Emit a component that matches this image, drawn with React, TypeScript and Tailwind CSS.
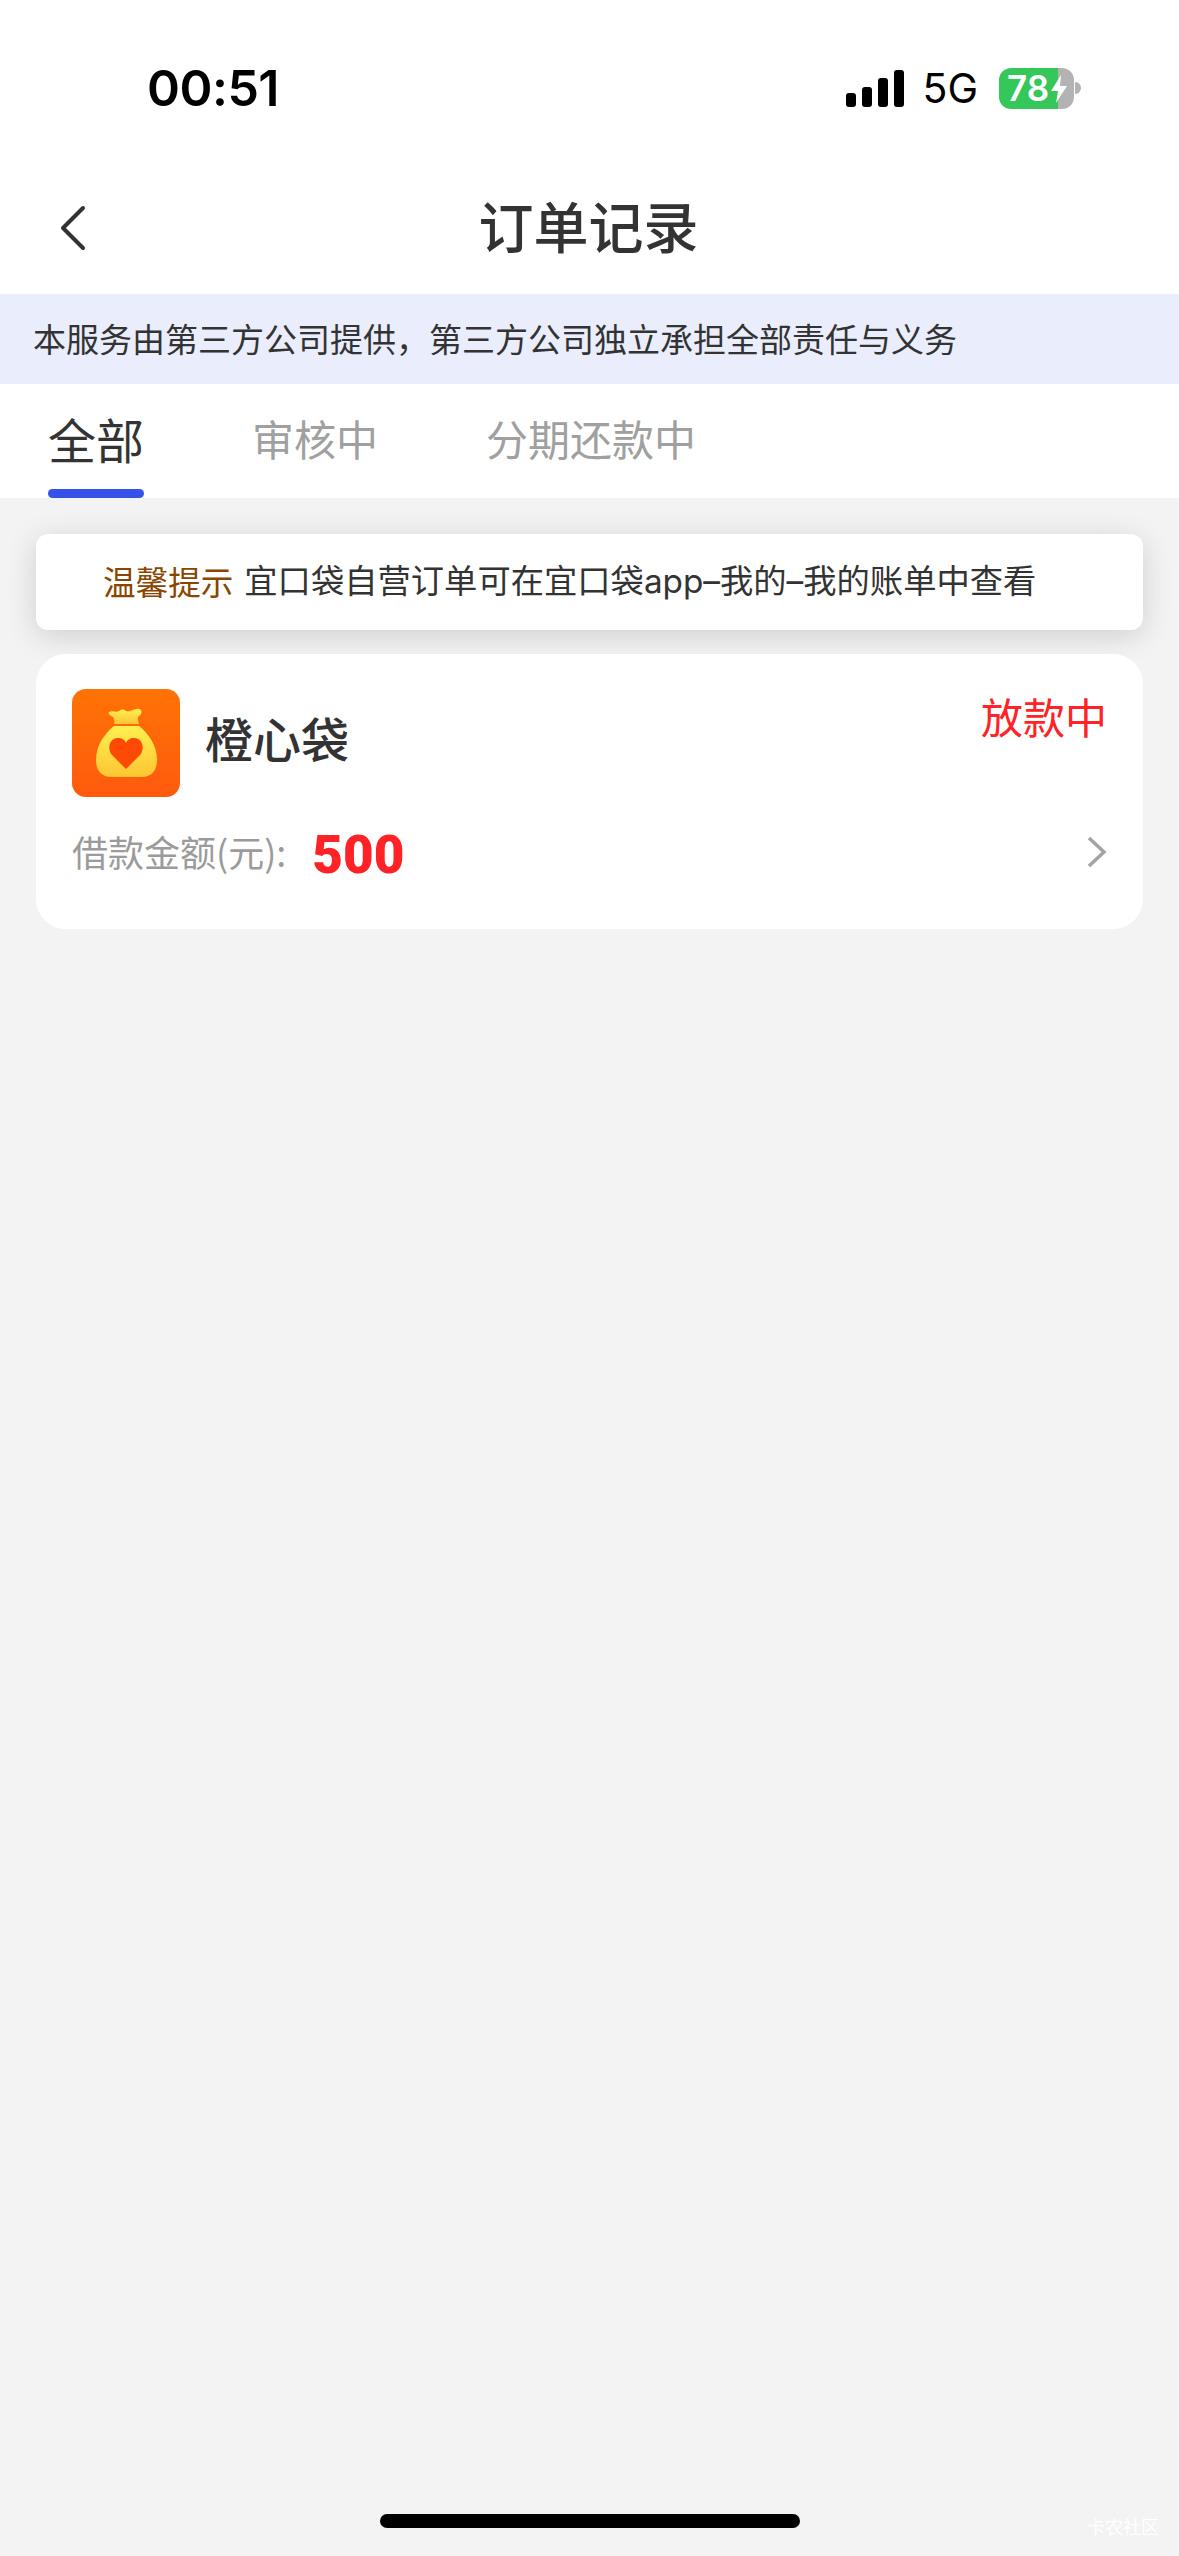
const cjk = "font-['Noto_Sans_CJK_SC','Inter',sans-serif]"

function StatusBar() {
  return (
    <div className="h-[165px] flex items-start justify-between pl-[147px] pr-[98px] pt-[57px]">
      <span className="font-['Inter',sans-serif] text-[50px] leading-[62px] font-semibold text-black tracking-[-0.5px]">00:51</span>
      <div className="flex items-center mt-[9px]">
        <div className="flex items-end gap-[6px] h-[37px]">
          <div className="w-[10px] h-[14px] rounded-[3px] bg-black" />
          <div className="w-[10px] h-[20px] rounded-[3px] bg-black" />
          <div className="w-[10px] h-[29px] rounded-[3px] bg-black" />
          <div className="w-[10px] h-[37px] rounded-[3px] bg-black" />
        </div>
        <span className="ml-[18px] font-['Inter',sans-serif] text-[41px] leading-[44px] text-black">5G</span>
        <div className="relative ml-[21px] flex items-center">
          <div className="relative flex w-[75px] h-[41px] rounded-[12px] overflow-hidden">
            <div className="w-[59px] bg-[#35c759]" />
            <div className="flex-1 bg-[#b3b3b3]" />
            <span className="absolute left-[8px] top-0 font-['Inter',sans-serif] text-[35px] leading-[41px] font-semibold text-white">78</span>
            <svg className="absolute left-[51px] top-[7px]" width="18" height="28" viewBox="0 0 18 28">
              <path d="M11 0 L1 16 H8 L6 28 L17 11 H10 Z" fill="#fff" />
            </svg>
          </div>
          <div className="ml-[1px] w-[6px] h-[12px] rounded-r-full bg-[#b3b3b3]" />
        </div>
      </div>
    </div>
  )
}

function NavBar() {
  return (
    <div className="relative h-[129px] flex items-center justify-center pb-[12px]">
      <svg className="absolute left-[58px] top-[40px]" width="30" height="46" viewBox="0 0 30 46" fill="none">
        <path d="M25 3 L5 23 L25 43" stroke="#333" strokeWidth="4" strokeLinecap="round" strokeLinejoin="round" />
      </svg>
      <h1 className="text-[55px] leading-[72px] font-medium text-[#333] -ml-[2px]">订单记录</h1>
    </div>
  )
}

function Tabs() {
  return (
    <div className="relative h-[114px] bg-white flex items-start pl-[48px] pt-[22px]">
      <span className="text-[48px] leading-[64px] text-[#333]">全部</span>
      <span className="ml-[108px] text-[42px] leading-[64px] text-[#a0a0a0]">审核中</span>
      <span className="ml-[108px] text-[42px] leading-[64px] text-[#a0a0a0]">分期还款中</span>
      <div className="absolute left-[48px] bottom-0 w-[96px] h-[9px] rounded-full bg-[#3652e8]" />
    </div>
  )
}

function BagLogo() {
  return (
    <svg width="108" height="108" viewBox="0 0 108 108" className="shrink-0">
      <defs>
        <linearGradient id="tile" x1="0" y1="0" x2="0" y2="1">
          <stop offset="0" stopColor="#ff7305" />
          <stop offset="1" stopColor="#ff5a0e" />
        </linearGradient>
        <linearGradient id="bag" x1="0" y1="0" x2="0" y2="1">
          <stop offset="0" stopColor="#fff04f" />
          <stop offset="1" stopColor="#ffc533" />
        </linearGradient>
      </defs>
      <rect width="108" height="108" rx="14" fill="url(#tile)" />
      <path d="M37 23 C41 21 44 24 47 22 C49 20 52 20 54 22 C58 24 62 19 67 20 C71 21 70 25 67 27 C65 29 66 32 67 35 H42 C43 31 42 28 39 27 C37 26 36 24 37 23 Z" fill="url(#bag)" />
      <path d="M42 37 H67 C76 44 85 56 85 71 C85 82 79 88 70 88 H39 C30 88 24 82 24 71 C24 56 33 44 42 37 Z" fill="url(#bag)" />
      <path d="M54 80 L40 66 C35 60 37 49 46 49 C50 49 53 51 54 54 C55 51 58 49 62 49 C71 49 73 60 68 66 Z" fill="#ff4a06" />
    </svg>
  )
}

export default function App() {
  return (
    <div className={`${cjk} relative w-[1179px] h-[2556px] flex flex-col bg-[#f3f3f3] overflow-hidden`}>
      <div className="bg-white">
        <StatusBar />
        <NavBar />
      </div>
      <div className="h-[90px] bg-[#e9edfc] flex items-center pl-[33px] text-[33px] text-[#333]">
        本服务由第三方公司提供，第三方公司独立承担全部责任与义务
      </div>
      <Tabs />

      <div className="flex-1 px-[36px] pt-[36px]">
        <div className="h-[96px] rounded-[12px] bg-white shadow-[0_6px_30px_rgba(0,0,0,0.15)] flex items-center pl-[67px] pb-[1px]">
          <span className="text-[32.6px] text-[#8a4500]">温馨提示</span>
          <span className="ml-[11px] text-[33.3px] text-[#333] font-['Inter','Noto_Sans_CJK_SC',sans-serif]">宜口袋自营订单可在宜口袋app–我的–我的账单中查看</span>
        </div>

        <div className="mt-[24px] h-[275px] rounded-[30px] bg-white pl-[36px] pr-[36px] pt-[35px]">
          <div className="flex items-start">
            <BagLogo />
            <span className="ml-[25px] mt-[20px] text-[48px] leading-[56px] font-medium text-[#333]">橙心袋</span>
            <span className="ml-auto -mt-[1px] text-[42px] leading-[56px] text-[#ff2226]">放款中</span>
          </div>
          <div className="flex items-center mt-[22px] h-[64px]">
            <span className="text-[36px] text-[#9b9b9b]">借款金额(元):</span>
            <span className="ml-[26px] mt-[10px] font-['Roboto',sans-serif] text-[53px] font-black text-[#ff2226]">500</span>
            <svg className="ml-auto mt-[2px]" width="20" height="32" viewBox="0 0 20 32" fill="none">
              <path d="M2 2 L17 16 L2 30" stroke="#a3a3a3" strokeWidth="3.5" />
            </svg>
          </div>
        </div>
      </div>

      <div className="h-[42px] flex justify-center">
        <div className="w-[420px] h-[14px] rounded-full bg-black" />
      </div>
      <span className="absolute left-[1087px] top-[2514px] text-[18px] leading-[24px] text-white">卡农社区</span>
    </div>
  )
}
